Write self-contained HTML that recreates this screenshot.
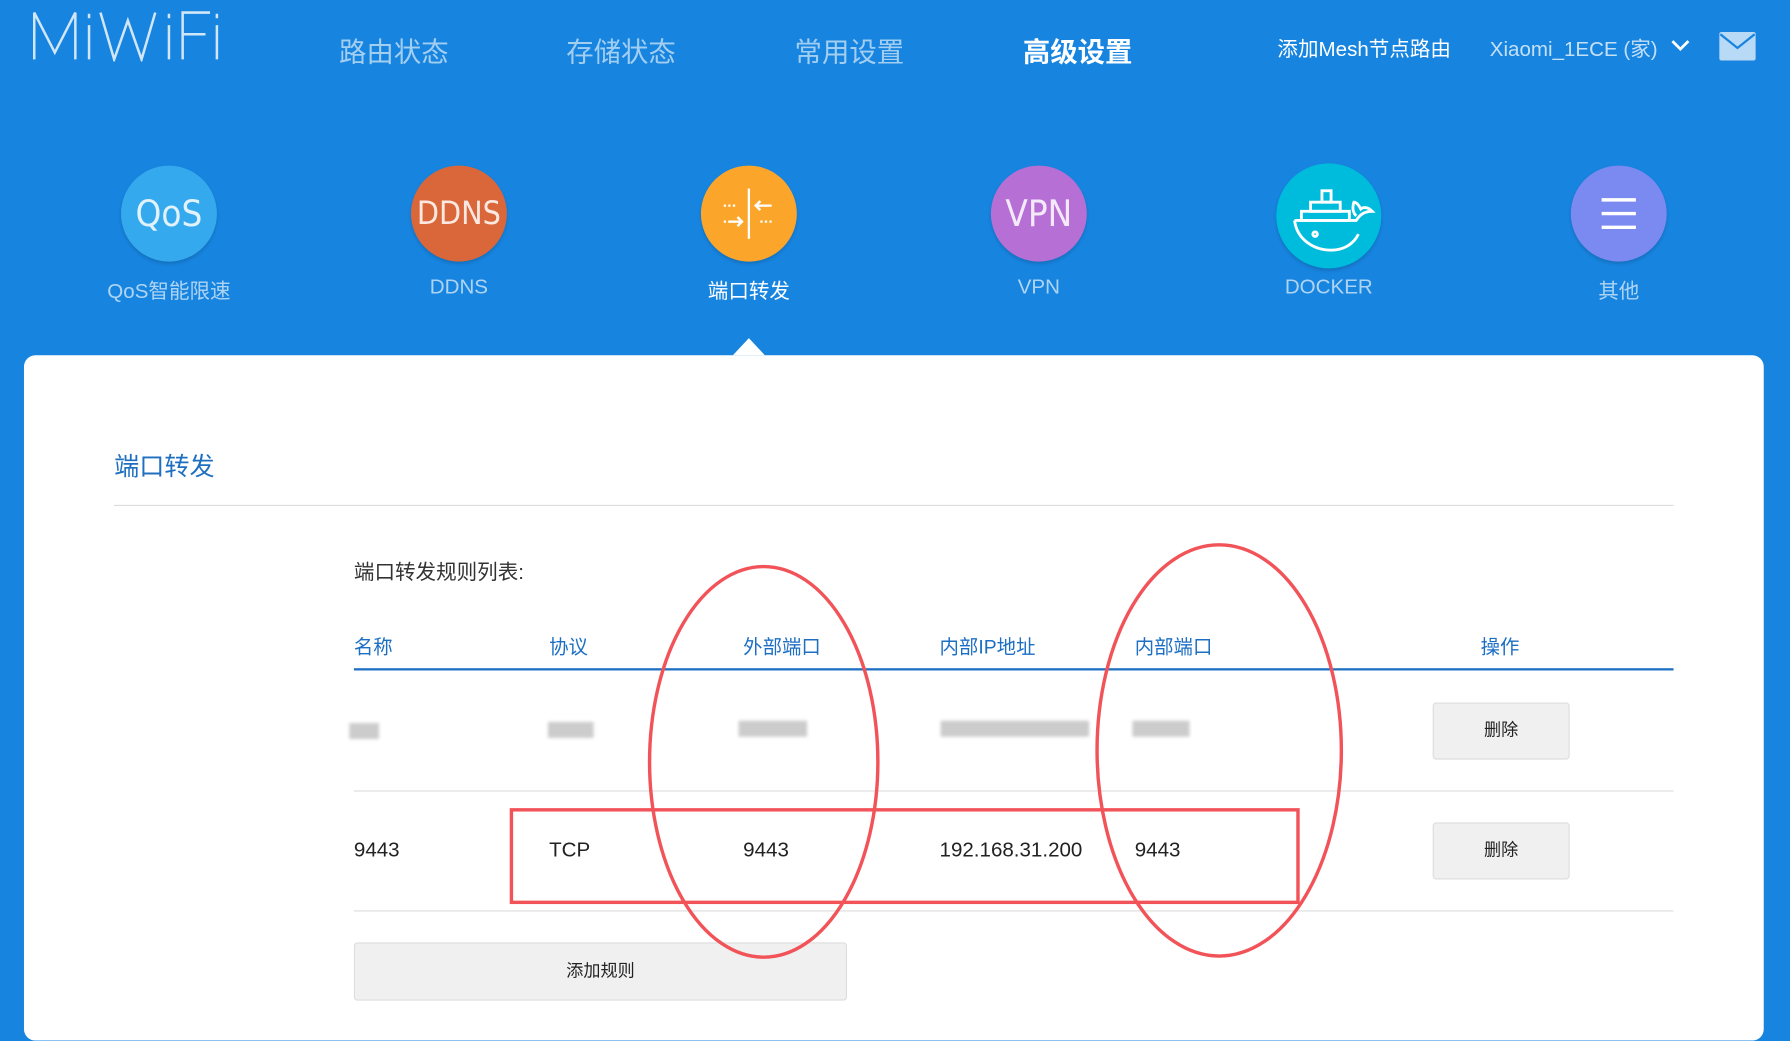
<!DOCTYPE html>
<html><head><meta charset="utf-8"><style>
html,body{margin:0;padding:0;width:1790px;height:1020px;overflow:hidden;background:#1784df}
#w{position:absolute;left:0;top:0;width:1568px;height:893px;transform:scale(1.14158,1.14222);transform-origin:0 0;font-family:"Liberation Sans","Noto Sans CJK SC",sans-serif;background:#1784df}
.a{position:absolute;white-space:nowrap}
.nav{font-size:24px;color:rgba(255,255,255,.6);top:26px}
.c{position:absolute;width:84px;height:84px;border-radius:50%;top:145px;box-shadow:0 2px 3px rgba(0,0,0,.15);color:rgba(255,255,255,.85);font-size:32px;text-align:center;line-height:84px;font-family:"DejaVu Sans Condensed","Liberation Sans Narrow",sans-serif}
.lb{position:absolute;top:241px;font-size:18px;color:rgba(255,255,255,.65);width:200px;text-align:center}
.h{top:552px;font-size:17px;color:#1d6fc4}
.t{top:734px;font-size:18px;color:#222}
.btn{position:absolute;background:#f0f0f0;border:1px solid #ddd;border-radius:3px;text-align:center;font-size:15px;color:#222}
.bl{position:absolute;height:14px;background:#ccc;filter:blur(1.5px)}
</style></head><body><div id="w">
<svg class="a" style="left:28px;top:8px" width="165" height="46" viewBox="0 0 165 46" fill="none" stroke="rgba(255,255,255,.8)" stroke-width="2.2"><path d="M2 44V3L20 38L38 3V44M50 14V44M50 4V8M60 3L72 44L84 10L96 44L108 3M120 14V44M120 4V8M132 44V3H156M132 22H152M162 14V44M162 4V8"/></svg>
<div class="a nav" style="left:297px">路由状态</div>
<div class="a nav" style="left:496px">存储状态</div>
<div class="a nav" style="left:696px">常用设置</div>
<div class="a nav" style="left:896px;color:#fff;font-weight:bold">高级设置</div>
<div class="a" style="left:1119px;top:29px;font-size:18px;color:#fff">添加Mesh节点路由</div>
<div class="a" style="left:1305px;top:29px;font-size:18px;color:rgba(255,255,255,.75)">Xiaomi_1ECE (家)</div>
<svg class="a" style="left:1463px;top:34px" width="18" height="12"><path d="M2 2L9 9L16 2" stroke="#fff" stroke-width="2.4" fill="none"/></svg>
<svg class="a" style="left:1506px;top:28px" width="32" height="25"><rect width="32" height="25" rx="2" fill="rgba(255,255,255,.7)"/><path d="M1 2L16 14L31 2" stroke="#1784df" stroke-width="2" fill="none"/></svg>

<div class="c" style="left:106px;background:#35a9ee">QoS</div>
<div class="c" style="left:360px;background:#d9673a;font-size:28px">DDNS</div>
<div class="c" style="left:614px;background:#fba62a"><svg width="84" height="84" style="position:absolute;left:0;top:0" stroke="#fff" stroke-width="2" fill="none"><path d="M42 20V64"/><path d="M20 35H32M48 35H64M52 31L48 35L52 39" stroke-dasharray="2 2"/><path d="M20 49H36M32 45L36 49L32 53M52 49H64" stroke-dasharray="2 2"/><path d="M48 35H60M52 31L48 35L52 39M24 49H36M32 45L36 49L32 53"/></svg></div>
<div class="c" style="left:868px;background:#b66fd5">VPN</div>
<div class="c" style="left:1118px;top:143px;width:92px;height:92px;background:#00bcdc"><svg width="92" height="92" style="position:absolute;left:0;top:0" stroke="#fff" stroke-width="2.5" fill="none"><path d="M16 50H70C74 44 78 42 84 42C80 38 76 38 74 40C72 36 70 34 68 34C66 40 68 44 70 46M16 50C18 66 32 76 48 76C60 76 68 70 72 62"/><rect x="22" y="42" width="42" height="8"/><rect x="30" y="34" width="26" height="8"/><rect x="40" y="24" width="8" height="10"/><circle cx="34" cy="62" r="2"/></svg></div>
<div class="c" style="left:1376px;background:#7b8af0"><svg width="84" height="84" style="position:absolute;left:0;top:0" stroke="#fff" stroke-width="3"><path d="M27 30H57M27 42H57M27 54H57"/></svg></div>
<div class="lb" style="left:48px">QoS智能限速</div>
<div class="lb" style="left:302px">DDNS</div>
<div class="lb" style="left:556px;color:#fff">端口转发</div>
<div class="lb" style="left:810px">VPN</div>
<div class="lb" style="left:1064px">DOCKER</div>
<div class="lb" style="left:1318px">其他</div>

<div class="a" style="left:21px;top:311px;width:1524px;height:600px;background:#fff;border-radius:10px"></div>
<div class="a" style="left:642px;top:296px;width:0;height:0;border-left:14px solid transparent;border-right:14px solid transparent;border-bottom:15px solid #fff"></div>

<div class="a" style="left:100px;top:391px;font-size:22px;color:#1f6fc0">端口转发</div>
<div class="a" style="left:100px;top:442px;width:1366px;height:1px;background:#ddd"></div>
<div class="a" style="left:310px;top:487px;font-size:18px;color:#333">端口转发规则列表:</div>
<div class="a h" style="left:310px">名称</div>
<div class="a h" style="left:481px">协议</div>
<div class="a h" style="left:651px">外部端口</div>
<div class="a h" style="left:823px">内部IP地址</div>
<div class="a h" style="left:994px">内部端口</div>
<div class="a h" style="left:1297px">操作</div>
<div class="a" style="left:310px;top:585px;width:1156px;height:2px;background:#1d6fc4"></div>
<div class="bl" style="left:306px;top:633px;width:26px"></div>
<div class="bl" style="left:480px;top:632px;width:40px"></div>
<div class="bl" style="left:647px;top:631px;width:60px"></div>
<div class="bl" style="left:824px;top:631px;width:130px"></div>
<div class="bl" style="left:992px;top:631px;width:50px"></div>
<div class="btn" style="left:1255px;top:615px;width:118px;height:48px;line-height:48px">删除</div>
<div class="a" style="left:310px;top:692px;width:1156px;height:1px;background:#ddd"></div>
<div class="a t" style="left:310px">9443</div>
<div class="a t" style="left:481px">TCP</div>
<div class="a t" style="left:651px">9443</div>
<div class="a t" style="left:823px">192.168.31.200</div>
<div class="a t" style="left:994px">9443</div>
<div class="btn" style="left:1255px;top:720px;width:118px;height:48px;line-height:48px">删除</div>
<div class="a" style="left:310px;top:797px;width:1156px;height:1px;background:#ddd"></div>
<div class="btn" style="left:310px;top:825px;width:430px;height:49px;line-height:49px">添加规则</div>

<svg class="a" style="left:0;top:0" width="1568" height="893" fill="none" stroke="#f25358" stroke-width="3"><rect x="448" y="709" width="689" height="81"/><ellipse cx="669" cy="667" rx="100" ry="171"/><ellipse cx="1068" cy="657" rx="107" ry="180"/></svg>
</div></body></html>
